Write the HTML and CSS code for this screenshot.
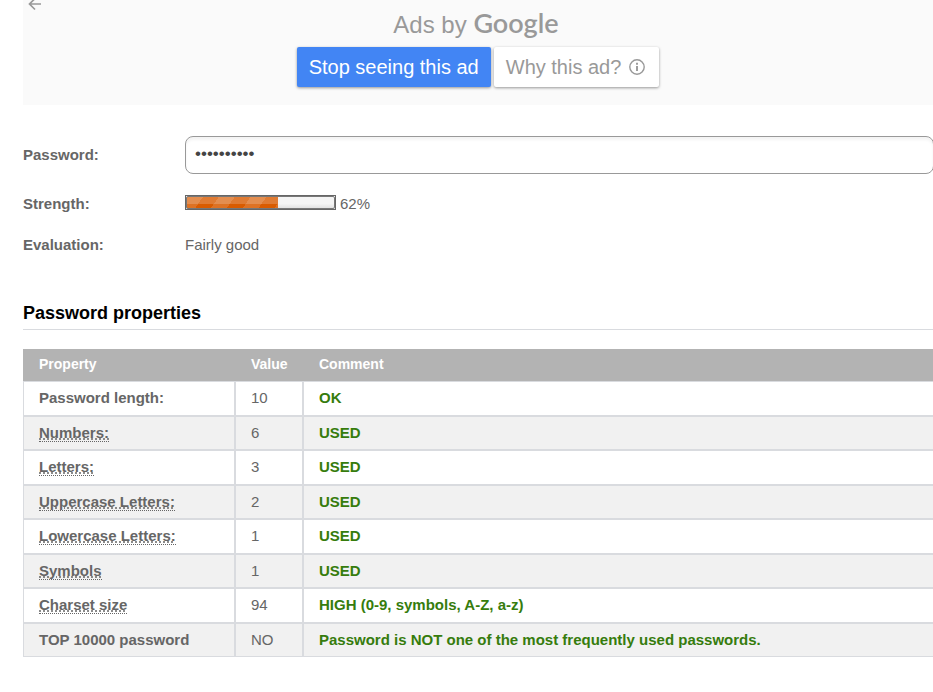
FILE: index.html
```html
<!DOCTYPE html>
<html lang="en">
<head>
<meta charset="utf-8">
<title>Password properties</title>
<link rel="stylesheet" href="styles.css">
</head>
<body>
<main class="page">
  <section class="ad">
    <button class="ad-back" type="button" aria-label="Back">
      <svg width="14" height="14" viewBox="0 0 14 14" fill="none" stroke="currentColor" stroke-width="1.7"><path d="M13 7H2M7 1.5L1.5 7L7 12.5"/></svg>
    </button>
    <p class="ad-by">Ads by <span class="ad-brand">Google</span></p>
    <div class="ad-actions">
      <button class="ad-button ad-stop" type="button">Stop seeing this ad</button>
      <button class="ad-button ad-why" type="button">Why this ad?
        <svg width="16" height="16" viewBox="0 0 16 16" fill="none" stroke="currentColor"><circle cx="8" cy="8" r="7.2" stroke-width="1.4"/><path d="M8 7v5M8 3.8v1.9" stroke-width="1.9"/></svg>
      </button>
    </div>
  </section>

  <section class="form">
    <label class="name" for="password">Password:</label>
    <input class="password" id="password" type="password" value="abcdefghij">
    <span class="name">Strength:</span>
    <div class="strength"><div class="meter"><div class="meter-fill" style="width: 62%"></div></div><span>62%</span></div>
    <span class="name">Evaluation:</span>
    <span>Fairly good</span>
  </section>

  <h2 class="heading">Password properties</h2>
  <table class="properties">
    <thead>
      <tr><th class="col-property">Property</th><th class="col-value">Value</th><th>Comment</th></tr>
    </thead>
    <tbody>
      <tr><th>Password length:</th><td>10</td><td class="comment">OK</td></tr>
      <tr><th><abbr>Numbers:</abbr></th><td>6</td><td class="comment">USED</td></tr>
      <tr><th><abbr>Letters:</abbr></th><td>3</td><td class="comment">USED</td></tr>
      <tr><th><abbr>Uppercase Letters:</abbr></th><td>2</td><td class="comment">USED</td></tr>
      <tr><th><abbr>Lowercase Letters:</abbr></th><td>1</td><td class="comment">USED</td></tr>
      <tr><th><abbr>Symbols</abbr></th><td>1</td><td class="comment">USED</td></tr>
      <tr><th><abbr>Charset size</abbr></th><td>94</td><td class="comment">HIGH (0-9, symbols, A-Z, a-z)</td></tr>
      <tr><th>TOP 10000 password</th><td>NO</td><td class="comment">Password is NOT one of the most frequently used passwords.</td></tr>
    </tbody>
  </table>
</main>
</body>
</html>
```
FILE: styles.css
```css
* { box-sizing: border-box; }

body {
  margin: 0;
  background: #fff;
  color: #666;
  font: 15px/18px "Liberation Sans", Arial, sans-serif;
}

.page {
  padding-left: 23px;
  overflow: hidden;
}

.ad {
  position: relative;
  padding: 7px 0 18px;
  background: #fafafa;
  color: #999;
  text-align: center;
}

.ad-back {
  position: absolute;
  top: -3px;
  left: 5px;
  display: flex;
  padding: 0;
  border: 0;
  background: none;
  color: #999;
}

.ad-by {
  margin: 0 0 6px;
  padding-right: 4px;
  font-size: 24px;
  line-height: 32px;
}

.ad-brand {
  font-family: Lato, sans-serif;
  font-size: 27px;
  font-weight: 600;
}

.ad-actions {
  display: flex;
  justify-content: center;
  gap: 3px;
}

.ad-button {
  display: flex;
  align-items: center;
  gap: 8px;
  height: 40px;
  padding: 0 13px;
  border: 0;
  border-radius: 2px;
  box-shadow: 0 1px 3px rgba(0, 0, 0, 0.4);
  font: 20px/24px "Liberation Sans", Arial, sans-serif;
}

.ad-stop {
  padding: 0 12px;
  background: #4285f4;
  color: #fff;
}

.ad-why {
  padding: 0 14px 0 12px;
  background: #fff;
  color: #999;
}

.form {
  display: grid;
  grid-template-columns: 162px 1fr;
  align-items: center;
  padding-top: 31px;
}

.name {
  font-weight: bold;
}

.password {
  height: 38px;
  margin-right: -1px;
  padding: 0 9px 3px;
  border: 1px solid #999;
  border-radius: 8px;
  background: #fff;
  box-shadow: inset 0 3px 3px #f4f4f4;
  color: #444;
  font: 17px/20px "Liberation Sans", Arial, sans-serif;
}

.form > :nth-child(n+3) {
  margin-top: 21px;
}

.form > :nth-child(n+5) {
  margin-top: 23px;
}

.strength {
  display: flex;
  gap: 4px;
}

.meter {
  position: relative;
  width: 151px;
  height: 15px;
  padding: 1px;
  border: 1px solid #666;
  background: linear-gradient(#f4f4f4 60%, #ddd);
}

.meter::after {
  content: "";
  position: absolute;
  inset: 0;
  border: 1px solid #777;
  border-radius: 2px;
}

.meter-fill {
  height: 100%;
  background:
    repeating-linear-gradient(125deg, rgba(255, 255, 255, 0.14) 0 13px, transparent 13px 26px),
    linear-gradient(#e07b33 60%, #d95b00 60%);
}

.heading {
  margin: 48px 0 19px;
  padding-bottom: 5px;
  border-bottom: 1px solid #d9dbdf;
  color: #000;
  font-size: 18px;
  line-height: 22px;
}

.properties {
  width: 100%;
  border-spacing: 0;
  table-layout: fixed;
  text-align: left;
}

.properties th,
.properties td {
  height: 35px;
  padding: 0 15px 2px;
  border: 1px solid #d9dbdf;
}

.properties th:last-child,
.properties td:last-child {
  border-right: 0;
}

.properties thead th {
  height: 32px;
  border-color: #b3b3b3;
  background: #b3b3b3;
  color: #fff;
  font-size: 14px;
}

.properties .col-property { width: 212px; }
.properties .col-value { width: 68px; }

.properties tbody tr:nth-child(even) > * {
  height: 34px;
  padding-bottom: 0;
  background: #f1f1f1;
}

.properties .comment {
  color: #367c0d;
  font-weight: bold;
}

abbr {
  border-bottom: 1px dotted #666;
  text-decoration: underline dotted;
}
```
